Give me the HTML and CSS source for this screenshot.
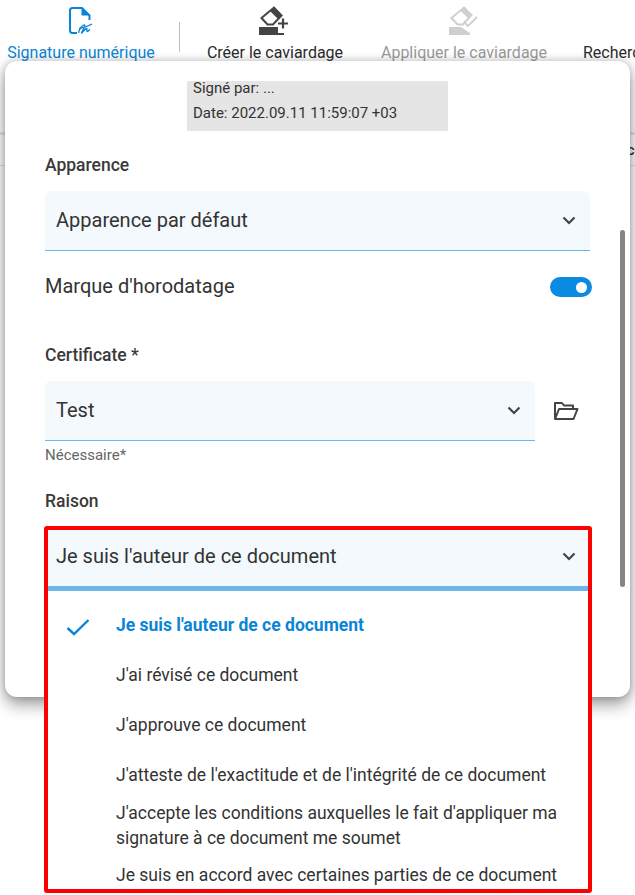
FILE: index.html
```html
<!DOCTYPE html>
<html lang="fr">
<head>
<meta charset="utf-8">
<title>Signature numérique</title>
<link rel="stylesheet" href="styles.css">
</head>
<body>
<div class="page">
  <header class="toolbar">
    <div class="tool tool-active tool-sign">
      <svg class="tool-icon" width="30" height="30" viewBox="0 0 30 30" fill="none" stroke="#0a84d6" stroke-width="2">
        <path d="M11 28H6.500a2.500 2.500 0 0 1-2.500-2.500V5.500A2.500 2.500 0 0 1 6.500 3H16l7.500 7.500V15"/>
        <path d="M15.500 3h1l7 7.500h-8z" fill="#0a84d6" stroke="none"/>
        <path d="M12.500 28c.5-3.500 4-8.500 6-8 1.800.5-2.800 6.500-3 8 .2.800 3.500-4.500 5-4.500 1.200 0-.5 3 .8 3 1 0 1.700-1.500 2.700-2.300M13 23.500c3.500-.5 9-2 13-4.500" stroke-width="1.300"/>
      </svg>
      <span>Signature numérique</span>
    </div>
    <div class="divider"></div>
    <div class="tool tool-create">
      <svg class="tool-icon" width="32" height="30" viewBox="0 0 32 30" fill="none" stroke="#444" stroke-width="2">
        <path d="M2.500 12 15 1.500 22.500 9.500 14 18.500H8.500z"/>
        <path d="M15 1 23.500 9.500 19.500 13.500 11 5z" fill="#444" stroke="none"/>
        <path d="M0 21h19v8H0z" fill="#444" stroke="none"/>
        <path d="M19 28h6M24 12.500v10M19 17.500h10" stroke-width="2.200"/>
      </svg>
      <span>Créer le caviardage</span>
    </div>
    <div class="tool tool-disabled tool-apply">
      <svg class="tool-icon" width="32" height="30" viewBox="0 0 32 30" fill="none" stroke="#cfcfcf" stroke-width="2">
        <path d="M3.500 12 16 1.500 23.500 9 15 18.500H9.500z"/>
        <path d="M16 1 24 9 20.500 12.500 12 4.500z" fill="#cfcfcf" stroke="none"/>
        <path d="M1 21h12l9 6v2H1z" fill="#cfcfcf" stroke="none"/>
        <path d="M16 16l4 4 9-9" stroke-width="1.800"/>
      </svg>
      <span>Appliquer le caviardage</span>
    </div>
    <div class="tool tool-search">
      <span>Rechercher</span>
    </div>
  </header>

  <div class="backdrop">
    <div class="back-line"></div>
    <div class="back-row"><span class="back-text">Ico</span></div>
  </div>

  <section class="modal">
    <div class="scrollbar"></div>
    <div class="preview">
      <div>Signé par: ...</div>
      <div>Date: 2022.09.11 11:59:07 +03</div>
    </div>

    <div class="label label-appearance">Apparence</div>
    <div class="select select-wide">
      <span>Apparence par défaut</span>
      <svg class="chevron" width="14" height="9" viewBox="0 0 14 9" fill="none" stroke="#444" stroke-width="2.200"><path d="M1.500 1.500 7 7l5.500-5.500"/></svg>
    </div>

    <div class="switch-row">
      <span class="switch-label">Marque d'horodatage</span>
      <span class="switch"><span class="knob"></span></span>
    </div>

    <div class="label label-cert">Certificate *</div>
    <div class="cert-row">
      <div class="select select-cert">
        <span>Test</span>
        <svg class="chevron" width="14" height="9" viewBox="0 0 14 9" fill="none" stroke="#444" stroke-width="2.200"><path d="M1.500 1.500 7 7l5.500-5.500"/></svg>
      </div>
      <svg class="folder" width="26" height="20" viewBox="0 0 26 20" fill="none" stroke="#444" stroke-width="2" stroke-linejoin="round"><path d="M2 18V2h7l2 2.500h9V8"/><path d="M2 18 6 8h18.500L20.500 18z"/></svg>
    </div>
    <div class="hint">Nécessaire*</div>

    <div class="label label-reason">Raison</div>
    <div class="frame">
      <div class="select select-open">
        <span>Je suis l'auteur de ce document</span>
        <svg class="chevron" width="14" height="9" viewBox="0 0 14 9" fill="none" stroke="#444" stroke-width="2.200"><path d="M1.500 1.500 7 7l5.500-5.500"/></svg>
      </div>
      <ul class="options">
        <li class="option option-selected">
          <svg class="check" width="24" height="18" viewBox="0 0 24 18" fill="none" stroke="#0a84d6" stroke-width="2.400"><path d="M1.500 10 8 16 22.500 2"/></svg>
          Je suis l'auteur de ce document
        </li>
        <li class="option">J'ai révisé ce document</li>
        <li class="option">J'approuve ce document</li>
        <li class="option">J'atteste de l'exactitude et de l'intégrité de ce document</li>
        <li class="option option-double">J'accepte les conditions auxquelles le fait d'appliquer ma signature à ce document me soumet</li>
        <li class="option option-last">Je suis en accord avec certaines parties de ce document</li>
      </ul>
    </div>
  </section>
</div>
</body>
</html>
```
FILE: styles.css
```css
* { box-sizing: border-box; }
html, body { margin: 0; padding: 0; }
body {
  background: #fff;
  font-family: Roboto, "Liberation Sans", sans-serif;
  color: #333;
  overflow: hidden;
}
.page {
  position: relative;
  width: 635px;
  height: 895px;
  overflow: hidden;
}
.toolbar {
  display: flex;
  height: 61px;
  white-space: nowrap;
  overflow: hidden;
}
.tool {
  display: flex;
  flex-direction: column;
  align-items: center;
  flex: none;
  font-size: 16px;
  line-height: 17px;
  color: #2b2b2b;
}
.tool-icon { display: block; flex: none; }
.tool-sign { margin-left: 6px; width: 150px; padding-top: 5px; color: #0a84d6; }
.tool-sign span { margin-top: 9px; }
.divider { width: 1px; height: 30px; margin: 22px 0 0 23px; background: #bdbdbd; flex: none; }
.tool-create { margin-left: 26px; width: 138px; padding-top: 6px; }
.tool-create span { margin-top: 8px; }
.tool-apply { margin-left: 36px; width: 168px; padding-top: 6px; color: #9a9a9a; }
.tool-apply span { margin-top: 8px; }
.tool-search { margin-left: 35px; padding-top: 44px; }

.backdrop { height: 110px; }
.back-line { height: 3px; margin-top: 71px; background: #e6e6e6; }
.back-row { height: 31px; border-bottom: 1px solid #e2e2e2; display: flex; justify-content: flex-end; font-size: 15px; line-height: 30px; }
.back-text { margin-right: -8px; font-weight: 500; }

.modal {
  position: absolute;
  left: 5px;
  top: 61px;
  width: 625px;
  height: 636px;
  background: #fff;
  border-radius: 12px;
  padding: 20px 40px 0;
  box-shadow: 0 8px 16px rgba(0, 0, 0, .36), 0 0 8px rgba(0, 0, 0, .22);
}
.scrollbar {
  position: absolute;
  right: 0;
  top: 169px;
  width: 5px;
  height: 357px;
  margin-right: 5px;
  background: #858585;
  border-radius: 3px;
}
.preview {
  width: 261px;
  height: 50px;
  margin-left: 142px;
  padding: 0 6px;
  background: #e5e5e5;
  font-size: 15px;
  line-height: 25px;
  overflow: hidden;
  margin-bottom: 24px;
}
.preview div:first-child { margin-top: -5px; }
.label { font-size: 17.500px; line-height: 20px; font-weight: 500; color: #3a3a3a; }
.label-appearance { margin-bottom: 16px; }
.select {
  display: flex;
  align-items: center;
  justify-content: space-between;
  background: #f4f9fd;
  border-bottom: 1px solid #6bb8e8;
  border-radius: 6px 6px 0 0;
  font-size: 20px;
  padding: 0 14px 0 11px;
  height: 60px;
}
.select span { margin-bottom: 2px; }
.select-wide { width: 545px; }
.switch-row {
  display: flex;
  justify-content: space-between;
  align-items: center;
  width: 547px;
  height: 30px;
  margin: 21px 0 43px;
  font-size: 20px;
}
.switch-label { margin-bottom: 2px; }
.switch {
  display: flex;
  align-items: center;
  justify-content: flex-end;
  width: 42px;
  height: 20px;
  padding-right: 5px;
  border-radius: 10px;
  background: #0a8ae0;
}
.knob { width: 11px; height: 11px; border-radius: 50%; background: #fff; }
.label-cert { margin-bottom: 16px; }
.cert-row { display: flex; align-items: center; }
.select-cert { width: 490px; }
.folder { margin-left: 18px; }
.hint { font-size: 15px; line-height: 18px; margin: 5px 0 27px; color: #666; }
.label-reason { margin-bottom: 15px; }
.frame {
  width: 548px;
  height: 367px;
  border: 4px solid #f00;
  border-radius: 3px;
  margin-left: -1px;
  background: #fff;
  position: relative;
}
.select-open {
  height: 61px;
  border-bottom: 5px solid #6bb8e8;
  border-radius: 0;
  padding: 0 12px 3px 8px;
}
.options { list-style: none; margin: 0; padding: 10px 0 0; font-size: 17.500px; line-height: 25px; }
.option {
  position: relative;
  min-height: 50px;
  padding: 12px 20px 0 68px;
  color: #333;
}
.option-selected { color: #0a84d6; font-weight: 700; }
.check { position: absolute; left: 18px; top: 17px; }
.option-double { min-height: 0; padding-top: 0; height: 50px; }
.option-last { min-height: 0; padding-top: 12px; }
```
